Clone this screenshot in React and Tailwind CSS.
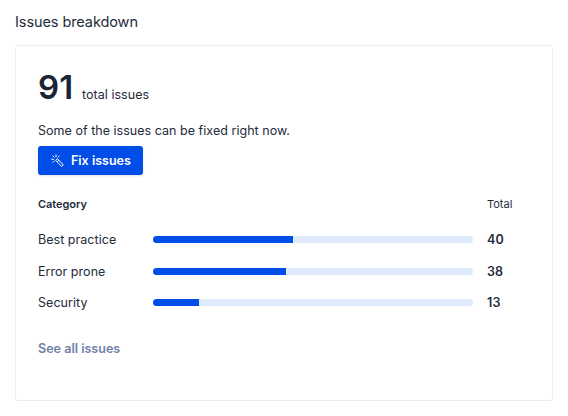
const categories = [
  { name: "Best practice", total: 40, fill: 140, height: "h-8" },
  { name: "Error prone", total: 38, fill: 133, height: "h-8" },
  { name: "Security", total: 13, fill: 46, height: "h-[30px]" },
];

function WandIcon() {
  return (
    <svg className="h-[13px] w-[13px]" viewBox="0 0 13 13" fill="none" stroke="currentColor" strokeWidth="1" strokeLinecap="round" strokeLinejoin="round">
      <path d="M4.9 6 6.2 4.7 12.3 10.7 10.9 12.1Z" />
      <path d="M6.4 7.5 7.7 6.2" />
      <path d="M5 .9V2.7M1.9 1.9 3.2 3.2M.7 5.3H2.5M2 8.3 3.2 7.1M8.1 2 7 3.1" />
    </svg>
  );
}

export default function App() {
  return (
    <main className="flex h-[416px] w-[568px] flex-col bg-white px-[15px] pt-3 font-['Inter',sans-serif] text-[#242c3c]">
      <h2 className="h-[33px] text-[14.5px] leading-5 tracking-[-0.08px]">Issues breakdown</h2>
      <section className="flex h-[356px] w-[538px] flex-col items-start rounded-[3px] border border-[#ebedf3] pl-[22px] pt-[23px]">
        <div className="flex h-[52px] items-baseline">
          <span className="text-[33px] font-semibold leading-9 tracking-[0.2px] text-[#1b2434]">91</span>
          <span className="ml-[8.5px] text-[12.5px] tracking-[0.04px]">total issues</span>
        </div>
        <p className="h-[25px] text-[12.5px] leading-5 tracking-[0.03px]">Some of the issues can be fixed right now.</p>
        <button className="flex h-[29px] w-[105px] items-center rounded-[3px] bg-[#004de8] pl-[13px] text-white shadow-sm">
          <WandIcon />
          <span className="ml-[7px] text-[12.5px] font-semibold leading-5">Fix issues</span>
        </button>
        <div className="mt-[19px] flex h-[30px] text-[11px] leading-5">
          <span className="w-[449px] font-semibold tracking-[-0.05px]">Category</span>
          <span>Total</span>
        </div>
        {categories.map((c) => (
          <div key={c.name} className={`flex items-center ${c.height}`}>
            <span className="w-[115px] text-[12.5px] leading-5 tracking-[0.04px]">{c.name}</span>
            <div className="mb-px h-[7px] w-[320px] overflow-hidden rounded-full bg-[#dfeafd]">
              <div className="h-full bg-[#004de8]" style={{ width: c.fill }} />
            </div>
            <span className="ml-[14px] text-[12.5px] font-semibold leading-5 tracking-[0.15px]">{c.total}</span>
          </div>
        ))}
        <a className="mt-[21px] text-[12.5px] font-semibold leading-5 tracking-[0.03px] text-[#6f81a8]">See all issues</a>
      </section>
    </main>
  );
}
